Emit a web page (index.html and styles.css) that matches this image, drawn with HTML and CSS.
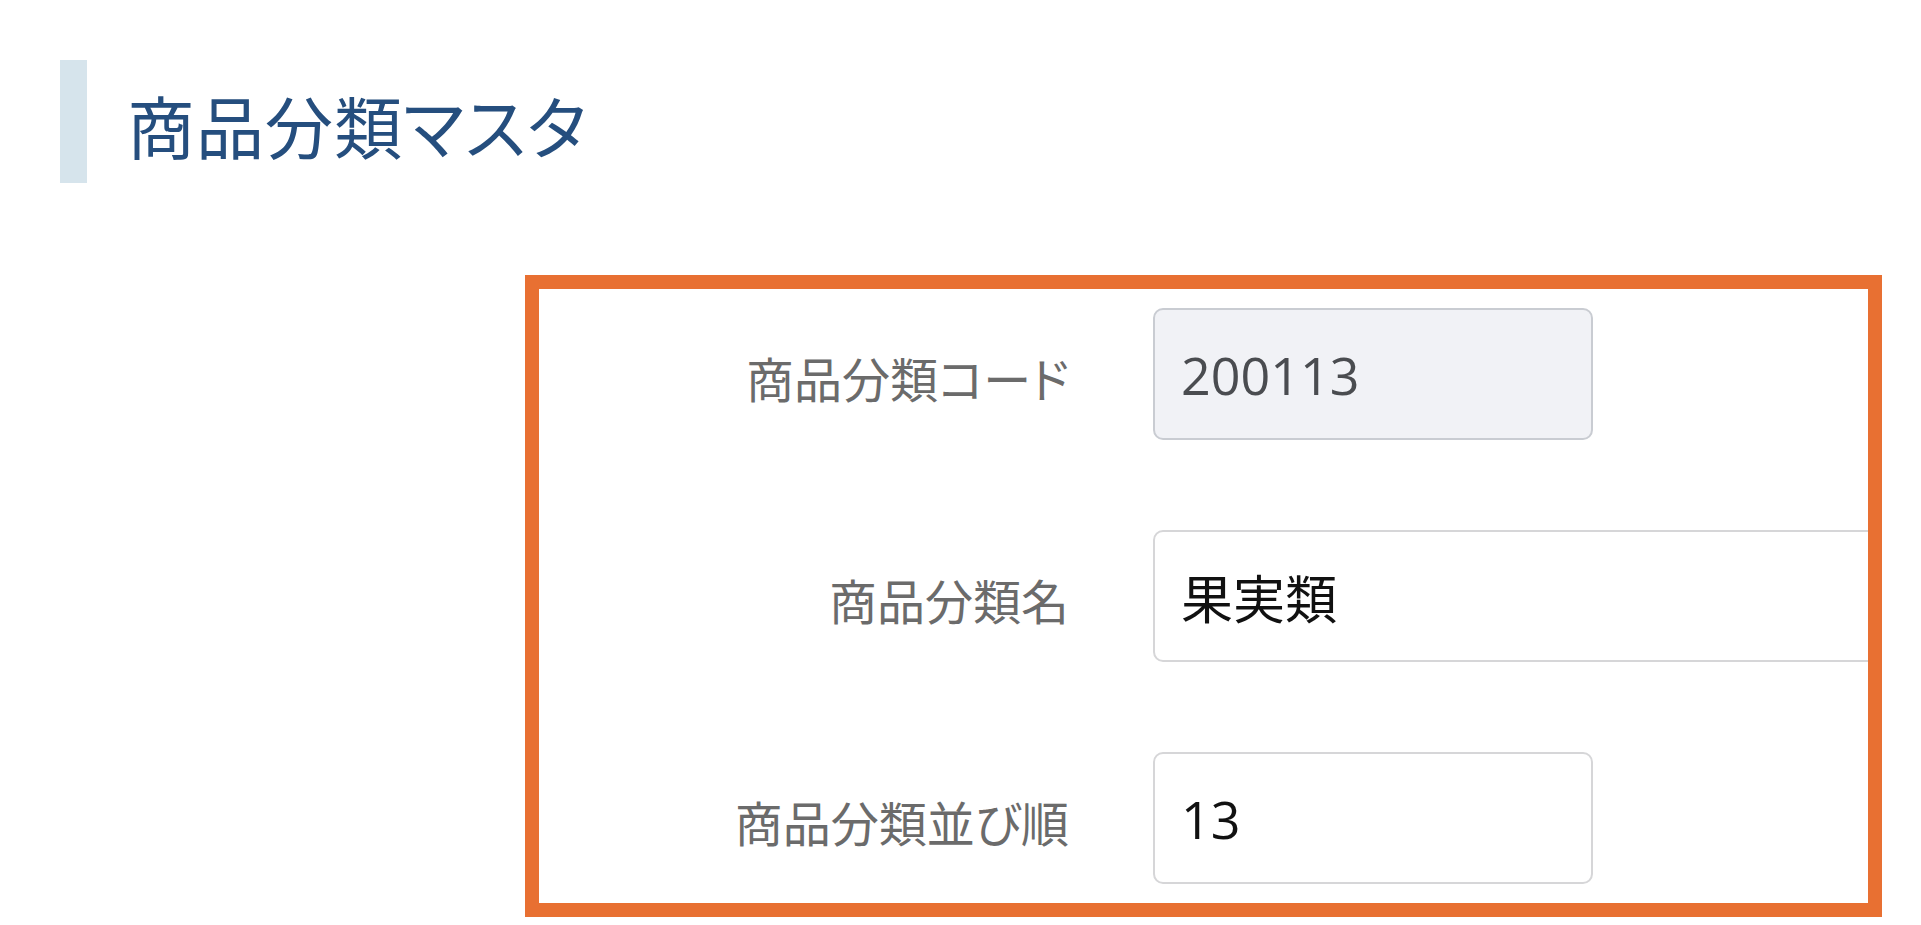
FILE: index.html
```html
<!DOCTYPE html>
<html lang="ja">
<head>
<meta charset="utf-8">
<title>商品分類マスタ</title>
<link rel="stylesheet" href="styles.css">
</head>
<body>
  <h1 class="page-title">商品分類マスタ</h1>
  <section class="highlight-box">
    <div class="form-grid">
      <div class="form-label">商品分類コード</div>
      <div class="form-field field-disabled field-short">200113</div>
      <div class="form-label">商品分類名</div>
      <div class="form-field field-wide">果実類</div>
      <div class="form-label">商品分類並び順</div>
      <div class="form-field field-short">13</div>
    </div>
  </section>
</body>
</html>
```

FILE: styles.css
```css
html, body {
  margin: 0;
  padding: 0;
  background: #ffffff;
}

body {
  font-family: "Noto Sans CJK JP", "Noto Sans", sans-serif;
  width: 1921px;
  height: 925px;
  overflow: hidden;
}

.page-title {
  margin: 60px 0 0 60px;
  height: 123px;
  box-sizing: border-box;
  border-left: 27px solid #d6e4ec;
  padding: 6px 0 0 40px;
  display: flex;
  align-items: center;
  font-size: 68px;
  font-weight: 400;
  line-height: 1;
  color: #254e7e;
  font-family: "Noto Sans CJK JP", sans-serif;
  font-feature-settings: "palt";
  letter-spacing: 1px;
}

.highlight-box {
  margin: 92px 0 0 525px;
  width: 1357px;
  height: 642px;
  box-sizing: border-box;
  border: 14px solid #e87032;
  overflow: hidden;
  padding: 19px 0 19px 0;
}

.form-grid {
  display: grid;
  grid-template-columns: 530px 715px;
  grid-auto-rows: 132px;
  column-gap: 84px;
  row-gap: 90px;
  align-items: center;
}

.form-label {
  text-align: right;
  font-size: 48px;
  line-height: 1;
  color: #6b6b6b;
  padding-top: 5px;
  font-family: "Noto Sans CJK JP", sans-serif;
  font-feature-settings: "palt";
}

.form-field {
  height: 132px;
  box-sizing: border-box;
  border: 2px solid #d6d6d8;
  border-radius: 10px;
  background: #ffffff;
  padding: 0 0 0 26px;
  display: flex;
  align-items: center;
  font-family: "Open Sans", "Noto Sans CJK JP", sans-serif;
  font-size: 52px;
  color: #111111;
}

.field-short {
  width: 440px;
}

.field-wide {
  width: 900px;
}

.field-disabled {
  background: #f1f2f6;
  border-color: #c9ccd2;
  color: #4a4c50;
}
```
